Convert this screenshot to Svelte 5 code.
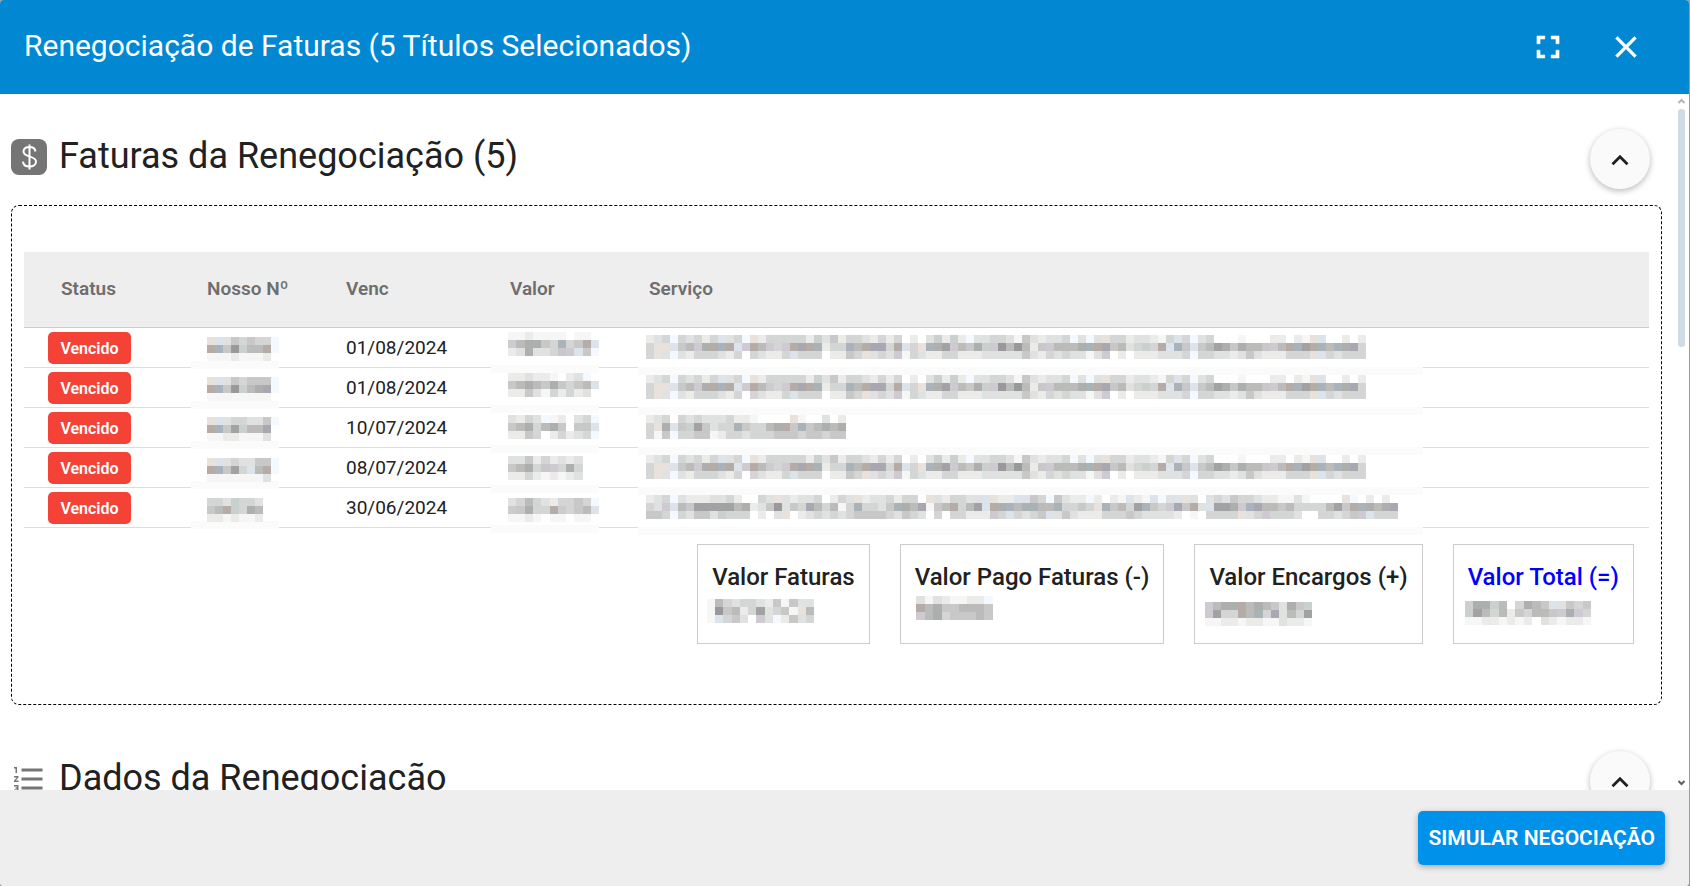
<script>
	let title = 'Renegociação de Faturas (5 Títulos Selecionados)';

	// one character per mosaic block, '.' leaves the block empty
	const shades = {
		1: '#f6f6f6', 2: '#ebebea', 3: '#e0e1e1', 4: '#d4d5d5', 5: '#c8c8c8',
		6: '#bbbbba', 7: '#adafae', 8: '#a2a2a5', 9: '#99999c',
		k: '#f3f9ff', b: '#dde3ea', B: '#aab2bc', w: '#e8e1dc', W: '#b5aca7',
		p: '#cfcad1', P: '#a9a7b2', g: '#c9d0ce', G: '#a9b3b5'
	};

	const fibra = [
		'234k43424b34kw2444442g3524432424.2.3g2g2k334431532334k3k3w44233214b4k34...1...22.21wb..2.2',
		'4wwb56p7WBWbpW6p4pWPWG244B6WPP4Wb4wB78p657gp969625p6667GWP5634g4WbB5b568757665p6WB8WB6B7P4',
		'4w3k32444324.43224b444.2254w343p1432244222333335324343313p.2.2223334k44332353222444wb43444'
	];
	const cancelada = [
		'234.4343334221....w1..3.2',
		'4w7b5g85344G54467W5B56767',
		'415k445512443444555455455'
	];
	const telefone = [
		'234k32223342..43w32334.243w2334244.w324433bw22bb54k5322k2.21b21bk3bw3.3435443221131....wk.2.2.',
		'43pb6588888672359354P64614G4435G76P156W468bW7B6GG66G4454wB5648B54pP5W3b887pBP66564444685WB767P',
		'554k43553g444.2.3w.2343434555543543.4.44222p4b4345b3532224445433332.1.4444w34p4443..44345pb444'
	];

	const faturas = [
		{
			vencimento: '01/08/2024',
			numero: { y: 9, rows: ['wb354544k', 'WB59g66Wk', '11121112'] },
			valor: { y: 4, rows: ['1121111.11', 'p67754B45Wb', '2373345pb5k'] },
			servico: { y: 7, rows: fibra }
		},
		{
			vencimento: '01/08/2024',
			numero: { y: 9, rows: ['wb354555k', 'WB59g67Pk', '11111111'] },
			valor: { y: 5, rows: ['223221.23k', '5676575456b', '2253142423'] },
			servico: { y: 7, rows: fibra }
		},
		{
			vencimento: '10/07/2024',
			numero: { y: 9, rows: ['wb344335k', 'WB58g66P', '11221113'] },
			valor: { y: 7, rows: ['3243k12.34k', '5674675.55b', '2254.24234k'] },
			servico: { y: 7, rows: cancelada }
		},
		{
			vencimento: '08/07/2024',
			numero: { y: 10, rows: ['wb343355k', 'WB584b6Wk', '11111113'] },
			valor: { y: 8, rows: ['335242323', '56745p474', '224212123'] },
			servico: { y: 7, rows: fibra }
		},
		{
			vencimento: '30/06/2024',
			numero: { y: 10, rows: ['443g443', '56Wg476', '2212112'] },
			valor: { y: 10, rows: ['3464324454k', 'p5744Wp456b', '1121.11.11'] },
			servico: { y: 7, rows: telefone }
		}
	];

	const totais = [
		{ label: 'Valor Faturas', x: -5, y: 2, width: 107, rows: ['1643443251533', '19562483451w6', '1b453.p3k2534'] },
		{ label: 'Valor Pago Faturas (-)', x: 1, y: -1, width: 77, rows: ['31321122k', 'W67556665', 'p67455565'] },
		{ label: 'Valor Encargos (+)', x: -4, y: 5, width: 107, rows: ['p677W6765375g', 'p844W6G4P3648', '1122122113221'] },
		{ label: 'Valor Total (=)', x: -3, y: 4, width: 126, destaque: true, rows: ['g77g6.4765b3545', 'g8646254665p7p4', '11221212.321221'] }
	];
</script>

{#snippet mosaic({ rows, y, x = 0 }, width, cell = 8, band = null)}
	<svg class="mosaic" {width} height="39" aria-hidden="true" shape-rendering="crispEdges">
		{#if band}
			<rect x={band.x} y={band.y} width={band.width} height="8" fill="#fbfbfb" />
		{/if}
		{#each rows as row, r}
			{#each row as block, c}
				{#if block !== '.'}
					<rect x={x + c * cell} y={y + r * 8} width={cell} height="8" fill={shades[block]} />
				{/if}
			{/each}
		{/each}
	</svg>
{/snippet}

{#snippet collapse(label)}
	<button class="round" type="button" aria-label={label}>
		<svg width="34" height="34" viewBox="0 -1 24 24">
			<path d="M7.41 15.41 12 10.83l4.59 4.58L18 14l-6-6-6 6z" fill="#212121" />
		</svg>
	</button>
{/snippet}

<div class="dialog">
	<header>
		<h1>{title}</h1>
		<button class="tool" type="button" aria-label="Tela cheia">
			<svg width="38" height="38" viewBox="0 0 24 24" fill="#fff">
				<path d="M7 14H5v5h5v-2H7v-3zm-2-4h2V7h3V5H5v5zm12 7h-3v2h5v-5h-2v3zM14 5v2h3v3h2V5h-5z" stroke="#fff" stroke-width="0.3" />
			</svg>
		</button>
		<button class="tool" type="button" aria-label="Fechar">
			<svg width="36" height="36" viewBox="0 0 24 24" fill="#fff">
				<path d="M19 6.41 17.59 5 12 10.59 6.41 5 5 6.41 10.59 12 5 17.59 6.41 19 12 13.41 17.59 19 19 17.59 13.41 12z" stroke="#fff" stroke-width="0.3" />
			</svg>
		</button>
	</header>

	<div class="body">
		<main>
			<section>
				<div class="heading">
					<svg class="icon" width="36" height="36" viewBox="0 0 36 36">
						<rect width="36" height="36" rx="8" fill="#757575" />
						<path d="M18.5 5.5v25M24.5 12.5c-.4-3-2.8-4.500-6-4.500-3.500 0-6 1.700-6 4.600 0 6.400 12.500 3.600 12.500 10 0 3-2.700 5-6.500 5s-6.300-1.800-6.500-5" fill="none" stroke="#fff" stroke-width="2" />
					</svg>
					<h2>Faturas da Renegociação (5)</h2>
					{@render collapse('Recolher faturas')}
				</div>

				<div class="panel">
					<table>
						<colgroup>
							<col class="c-status" /><col class="c-numero" /><col class="c-venc" /><col class="c-valor" /><col />
						</colgroup>
						<thead>
							<tr>
								<th>Status</th>
								<th>Nosso Nº</th>
								<th>Venc</th>
								<th>Valor</th>
								<th>Serviço</th>
							</tr>
						</thead>
						<tbody>
							{#each faturas as fatura}
								<tr>
									<td><span class="badge">Vencido</span></td>
									<td>{@render mosaic(fatura.numero, 72, 8, { x: -16, y: 33, width: 88 })}</td>
									<td>{fatura.vencimento}</td>
									<td>{@render mosaic({ ...fatura.valor, x: -2 }, 91, 8.3, { x: -19, y: 37, width: 108 })}</td>
									<td>{@render mosaic({ ...fatura.servico, x: -3 }, 752, 8, { x: -11, y: 39, width: 785 })}</td>
								</tr>
							{/each}
						</tbody>
					</table>

					<div class="totals">
						{#each totais as total}
							<div class="total" class:destaque={total.destaque}>
								<strong>{total.label}</strong>
								{@render mosaic(total, total.width, total.width / total.rows[0].length)}
							</div>
						{/each}
					</div>
				</div>
			</section>

			<section>
				<div class="heading">
					<svg class="icon" width="36" height="36" viewBox="0 0 24 24" fill="#757575">
						<path d="M2 17h2v.5H3v1h1v.5H2v1h3v-4H2v1zm1-9h1V4H2v1h1v3zm-1 3h1.8L2 13.1v.9h3v-1H3.2L5 10.9V10H2v1zm5-6v2h14V5H7zm0 14h14v-2H7v2zm0-6h14v-2H7v2z" />
					</svg>
					<h2>Dados da Renegociação</h2>
					{@render collapse('Recolher dados')}
				</div>
			</section>
		</main>

		<div class="rail" aria-hidden="true">
			<svg width="7" height="6" viewBox="0 0 7 6"><path d="M.5 5 3.5 2l3 3" fill="none" stroke="#b5b5b5" stroke-width="2" /></svg>
			<div class="thumb"></div>
			<svg width="7" height="6" viewBox="0 0 7 6"><path d="M.5 1l3 3 3-3" fill="none" stroke="#606060" stroke-width="2" /></svg>
		</div>
	</div>

	<footer>
		<button class="primary" type="button">SIMULAR NEGOCIAÇÃO</button>
	</footer>
</div>

<style>
	:global(body) {
		margin: 0;
		background: #9b9b9b;
	}

	.dialog {
		display: flex;
		flex-direction: column;
		height: 100vh;
		margin-right: 1px;
		border-radius: 4px;
		overflow: hidden;
		background: #fff;
		color: #212121;
		font-family: Roboto, sans-serif;
	}

	button {
		border: 0;
		padding: 0;
		font-family: inherit;
		cursor: pointer;
	}

	svg {
		display: block;
	}

	header {
		display: flex;
		align-items: center;
		flex: none;
		height: 94px;
		padding: 0 33px 0 24px;
		background: #0288d3;
		color: #fff;
	}

	h1 {
		flex: 1;
		margin: 0;
		padding-bottom: 2px;
		font-size: 30px;
		font-weight: 400;
		line-height: 36px;
	}

	.tool {
		display: flex;
		align-items: center;
		justify-content: center;
		width: 60px;
		height: 60px;
		background: none;
	}

	.tool + .tool {
		margin-left: 18px;
	}

	.body {
		display: flex;
		flex: 1;
		min-height: 0;
	}

	main {
		flex: 1;
		min-width: 0;
		overflow: hidden;
		padding: 35px 12px 0 11px;
	}

	section {
		margin-bottom: 46px;
	}

	.heading {
		display: flex;
		align-items: center;
		height: 60px;
		padding-right: 12px;
		margin-bottom: 16px;
	}

	.icon {
		margin: 0 12px 4px 0;
	}

	h2 {
		flex: 1;
		margin: 0;
		padding-bottom: 6px;
		font-size: 36px;
		font-weight: 400;
		line-height: 42px;
	}

	.round {
		display: flex;
		align-items: center;
		justify-content: center;
		width: 60px;
		height: 60px;
		border-radius: 50%;
		background: #fafafa;
		box-shadow: 0 2px 6px rgba(0, 0, 0, 0.28);
	}

	.panel {
		padding: 46px 12px 60px;
		border: 1px dashed #000;
		border-radius: 8px;
	}

	table {
		width: 100%;
		table-layout: fixed;
		border-collapse: separate;
		border-spacing: 0;
	}

	.c-status {
		width: 183px;
	}

	.c-numero,
	.c-valor {
		width: 139px;
	}

	.c-venc {
		width: 164px;
	}

	th {
		box-sizing: border-box;
		height: 76px;
		padding: 0 0 2px;
		border-bottom: 1px solid #ccc;
		background: #eee;
		color: #6e6e6e;
		font-size: 19px;
		font-weight: 600;
		text-align: left;
	}

	th:first-child {
		padding-left: 37px;
	}

	td {
		box-sizing: border-box;
		height: 40px;
		padding: 0;
		border-bottom: 1px solid #ddd;
		font-size: 19px;
		line-height: 24px;
	}

	td:first-child {
		padding-left: 24px;
	}

	.badge {
		display: block;
		width: 83px;
		padding-top: 2px;
		border-radius: 5px;
		background: #f44336;
		color: #fff;
		font-size: 16px;
		font-weight: 600;
		line-height: 30px;
		text-align: center;
	}

	.mosaic {
		overflow: visible;
	}

	.totals {
		display: flex;
		justify-content: flex-end;
		gap: 30px;
		margin: 16px 15px 0 0;
	}

	.total {
		box-sizing: border-box;
		height: 100px;
		padding: 16px 14px;
		border: 1px solid #ccc;
	}

	.total strong {
		display: block;
		padding-bottom: 4px;
		font-size: 24px;
		font-weight: 500;
		line-height: 32px;
	}

	.destaque strong {
		color: #00f;
	}

	.rail {
		display: flex;
		flex-direction: column;
		align-items: center;
		width: 15px;
		padding: 4px 0;
	}

	.thumb {
		width: 7px;
		height: 238px;
		margin: 5px 0 auto;
		border-radius: 3px;
		background: #d0dbe4;
	}

	footer {
		display: flex;
		align-items: center;
		justify-content: flex-end;
		flex: none;
		height: 96px;
		padding-right: 24px;
		background: #eee;
	}

	.primary {
		height: 54px;
		padding: 0 10px;
		border-radius: 5px;
		background: #0091ea;
		color: #fff;
		font-size: 21px;
		font-weight: 600;
		box-shadow: 0 2px 6px rgba(0, 0, 0, 0.3);
	}
</style>
